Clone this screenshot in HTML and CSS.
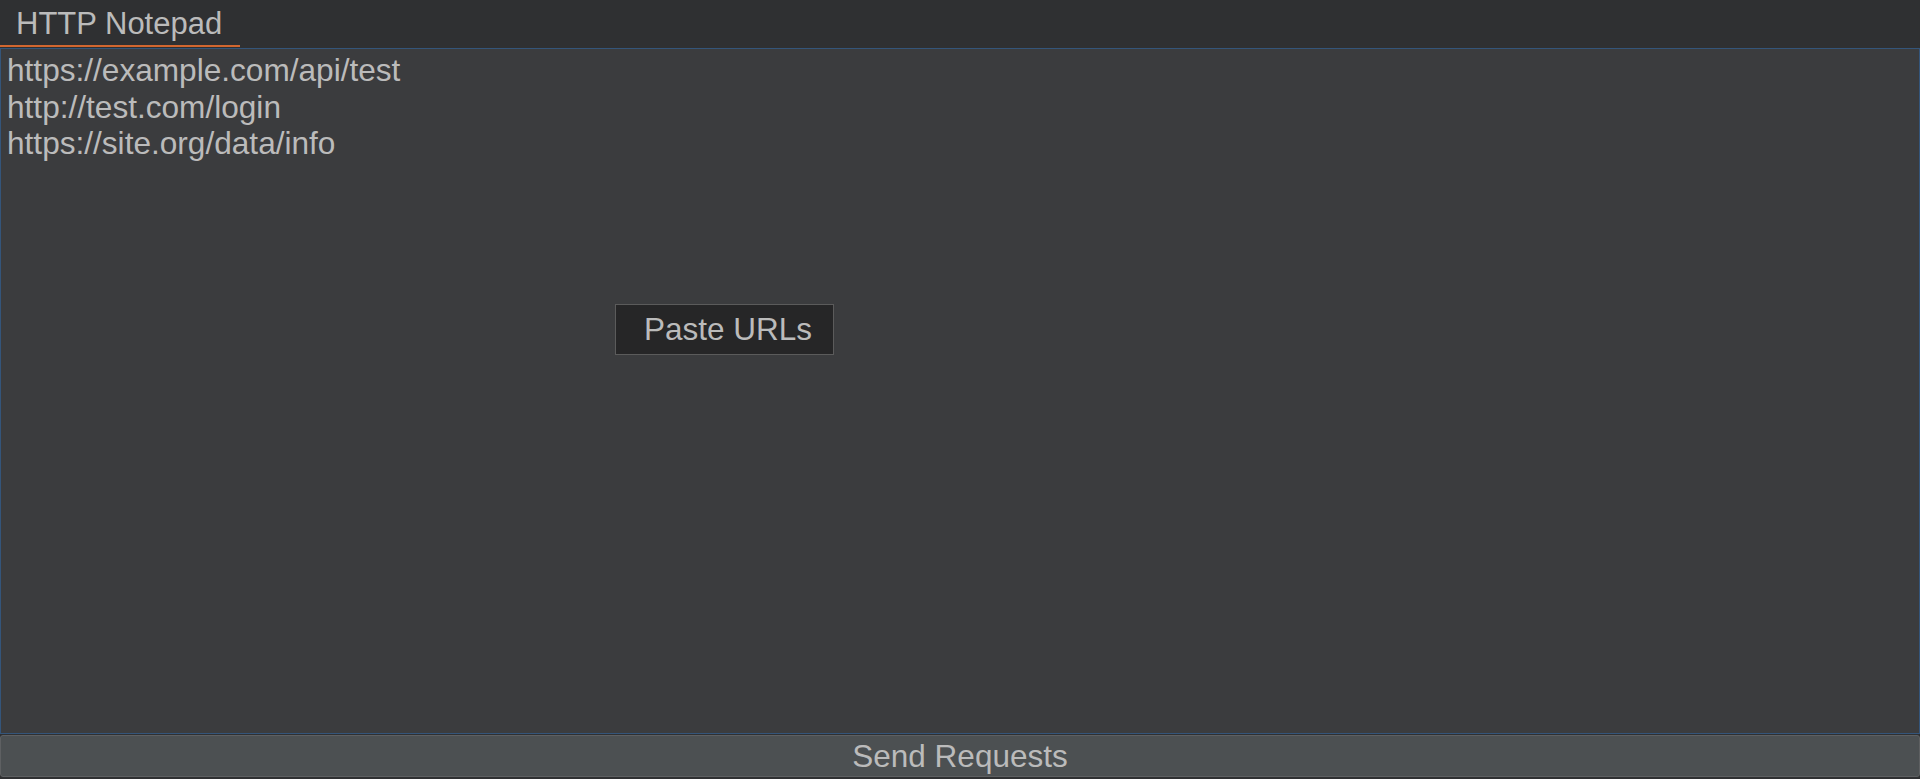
FILE: index.html
```html
<!DOCTYPE html>
<html>
<head>
<meta charset="utf-8">
<link rel="stylesheet" href="styles.css">
</head>
<body>
<div class="app">
  <div class="tabbar">
    <div class="tab">HTTP Notepad</div>
  </div>
  <div class="editor">
    <div class="lines">
      <div>https://example.com/api/test</div>
      <div>http://test.com/login</div>
      <div>https://site.org/data/info</div>
    </div>
    <div class="popup">Paste URLs</div>
  </div>
  <div class="send">Send Requests</div>
</div>
</body>
</html>
```
FILE: styles.css
```css
html, body {
  margin: 0;
  padding: 0;
  background: #2f3032;
}
body {
  font-family: "Liberation Sans", Arial, sans-serif;
  color: #bbbbbb;
}
.app {
  display: flex;
  flex-direction: column;
  width: 1920px;
  height: 779px;
}
.tabbar {
  height: 48px;
  display: flex;
  background: #2f3032;
  flex: none;
}
.tab {
  width: 240px;
  box-sizing: border-box;
  height: 47px;
  padding-left: 16px;
  padding-top: 6px;
  font-size: 31px;
  line-height: 35px;
  border-bottom: 2px solid #d2662f;
}
.editor {
  position: relative;
  height: 686px;
  box-sizing: border-box;
  border: 1px solid #34557a;
  background: #3b3c3e;
  padding: 3px 6px;
  flex: none;
}
.lines {
  font-size: 31.6px;
  line-height: 36.7px;
}
.popup {
  position: absolute;
  left: 614px;
  top: 255px;
  width: 219px;
  height: 51px;
  box-sizing: border-box;
  background: #262627;
  border: 1px solid #5b5b5b;
  font-size: 31.5px;
  line-height: 49px;
  padding-left: 28px;
}
.send {
  margin-top: 1px;
  height: 42px;
  box-sizing: border-box;
  background: #4c5052;
  border: 1px solid #5e6062;
  border-radius: 3px;
  font-size: 31.5px;
  line-height: 40px;
  text-align: center;
  flex: none;
}
```
